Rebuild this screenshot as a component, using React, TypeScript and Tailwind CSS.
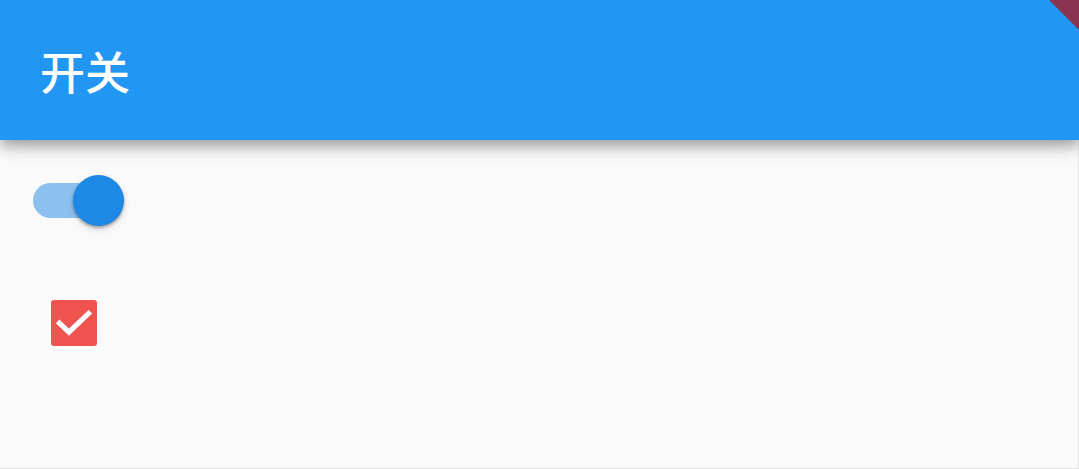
import React from 'react';

const App: React.FC = () => {
  return (
    <div className="relative w-[1079px] h-[469px] overflow-hidden bg-[#fafafa] flex flex-col" style={{ fontFamily: '"Noto Sans CJK SC", "Noto Sans", sans-serif' }}>
      {/* app bar */}
      <div className="relative z-10 h-[140px] shrink-0 bg-[#2196f3] flex items-center pl-[40px] shadow-[0_5px_10px_-2px_rgba(0,0,0,0.2),0_10px_12px_0_rgba(0,0,0,0.14),0_2px_25px_0_rgba(0,0,0,0.12)]">
        <h1 className="text-white text-[45px] font-medium leading-none">开关</h1>
      </div>

      <div className="flex-1 flex flex-col border-r border-b border-[#e4e4e4]">
        {/* switch */}
        <div className="w-[148px] h-[120px] flex items-center justify-center">
          <div className="relative w-[83px] h-[35px] rounded-full bg-[#8cc1ef]">
            <div className="absolute right-[-8px] top-[-8px] w-[51px] h-[51px] rounded-full bg-[#1e88e5] shadow-[0_2px_3px_rgba(0,0,0,0.3),0_3px_8px_rgba(0,0,0,0.12)]" />
          </div>
        </div>

        {/* checkbox */}
        <div className="ml-[51px] mt-[40px] w-[46px] h-[46px] rounded-[3px] bg-[#ef5350]">
          <svg viewBox="0 0 18 18" className="w-full h-full">
            <path d="M2.6 8.4 L7 12.6 L15.4 4.6" fill="none" stroke="white" strokeWidth="2" />
          </svg>
        </div>
      </div>

      {/* debug banner corner */}
      <svg className="absolute top-0 right-0 z-20" width="30" height="30" viewBox="0 0 30 30">
        <polygon points="0,0 30,0 30,30" fill="#8b3452" />
      </svg>
    </div>
  );
};

export default App;
